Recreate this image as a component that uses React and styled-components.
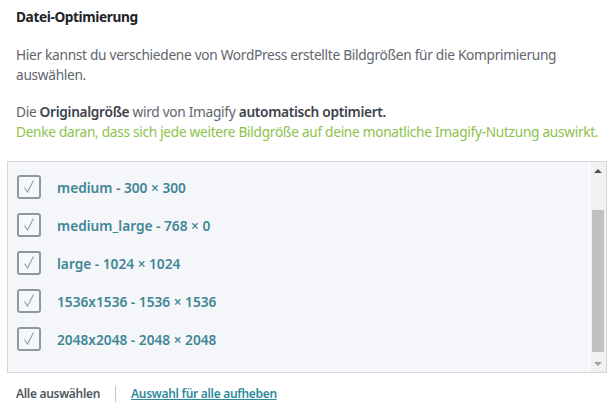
import React, { useEffect, useRef } from 'react';
import styled, { createGlobalStyle } from 'styled-components';

const Global = createGlobalStyle`
  html, body { margin: 0; padding: 0; background: #fff; }
  body { font-family: "Noto Sans", "Open Sans", sans-serif; font-size: 13.7px; color: #5f656d; }
`;

const Page = styled.div`
  width: 616px;
  padding: 7px 9px 0 7px;
  box-sizing: border-box;
`;

const Title = styled.h3`
  margin: 0 0 18px 9px;
  font-size: 13.7px;
  line-height: 20px;
  font-weight: 700;
  letter-spacing: -0.4px;
  color: #1d2327;
`;

const Text = styled.p`
  margin: 0 0 ${p => p.$gap || 0}px 9px;
  line-height: 20px;
  letter-spacing: -0.3px;
  color: #60666e;
  b { color: #3c434a; font-weight: 600; }
`;

const Green = styled.span`
  display: block;
  white-space: nowrap;
  color: #8bc34a;
`;

const Frame = styled.div`
  display: flex;
  height: 212px;
  box-sizing: border-box;
  border: 1px solid #d3d6da;
  background: #f5f6fa;
`;

const List = styled.div`
  flex: 1;
  overflow: hidden;
  padding: 14px 0 14px 9px;
`;

const Bar = styled.div`
  width: 16px;
  flex: none;
  display: flex;
  flex-direction: column;
  background: #f1f1f1;
  border-left: 1px solid #fff;
`;

const Arrow = styled.div`
  height: 17px;
  flex: none;
  display: flex;
  align-items: center;
  justify-content: center;
  &::after {
    content: '';
    border-left: 4px solid transparent;
    border-right: 4px solid transparent;
    ${p => p.$down
      ? 'border-top: 4px solid #a3a3a3;'
      : 'border-bottom: 4px solid #505050;'}
  }
`;

const Track = styled.div`
  flex: 1;
  display: flex;
  flex-direction: column;
  padding: 0 2px 3px;
`;

const Thumb = styled.div`
  margin-top: auto;
  height: 142px;
  background: #c1c1c1;
`;

const Row = styled.label`
  display: flex;
  align-items: center;
  height: 38px;
  gap: 16px;
  color: #3f8695;
  font-weight: 600;
  font-size: 13.7px;
`;

const Box = styled.span`
  width: 24px;
  height: 24px;
  box-sizing: border-box;
  border: 2px solid #8f98a2;
  border-radius: 3px;
  background: #f7f8fa;
  display: flex;
  align-items: center;
  justify-content: center;
  flex: none;
`;

const Footer = styled.div`
  display: flex;
  align-items: center;
  margin: 11px 0 0 9px;
  line-height: 20px;
  font-size: 12px;
  letter-spacing: -0.3px;
  font-weight: 600;
`;

const Plain = styled.span`
  color: #50575e;
`;

const Sep = styled.span`
  width: 1px;
  height: 16px;
  background: #c3c4c7;
  margin: 0 15px;
`;

const Link = styled.a`
  color: #2e8a9c;
  text-decoration: underline;
`;

const sizes = [
  'thumbnail - 150 × 150',
  'medium - 300 × 300',
  'medium_large - 768 × 0',
  'large - 1024 × 1024',
  '1536x1536 - 1536 × 1536',
  '2048x2048 - 2048 × 2048',
];

function Check() {
  return (
    <Box>
      <svg width="20" height="20" viewBox="0 0 20 20">
        <polyline points="5.5,10.5 8.5,15 14.5,3.5" fill="none" stroke="#97a3ae" strokeWidth="1.2" />
      </svg>
    </Box>
  );
}

export default function App() {
  const list = useRef(null);
  useEffect(() => {
    if (list.current) list.current.scrollTop = list.current.scrollHeight;
  }, []);

  return (
    <Page>
      <Global />
      <Title>Datei-Optimierung</Title>
      <Text $gap={17}>
        Hier kannst du verschiedene von WordPress erstellte Bildgrößen für die Komprimierung auswählen.
      </Text>
      <Text $gap={19}>
        Die <b>Originalgröße</b> wird von Imagify <b>automatisch optimiert.</b>
        <Green>Denke daran, dass sich jede weitere Bildgröße auf deine monatliche Imagify-Nutzung auswirkt.</Green>
      </Text>
      <Frame>
        <List ref={list}>
          {sizes.map(s => (
            <Row key={s}>
              <Check />
              {s}
            </Row>
          ))}
        </List>
        <Bar>
          <Arrow />
          <Track><Thumb /></Track>
          <Arrow $down />
        </Bar>
      </Frame>
      <Footer>
        <Plain>Alle auswählen</Plain>
        <Sep />
        <Link href="#">Auswahl für alle aufheben</Link>
      </Footer>
    </Page>
  );
}
